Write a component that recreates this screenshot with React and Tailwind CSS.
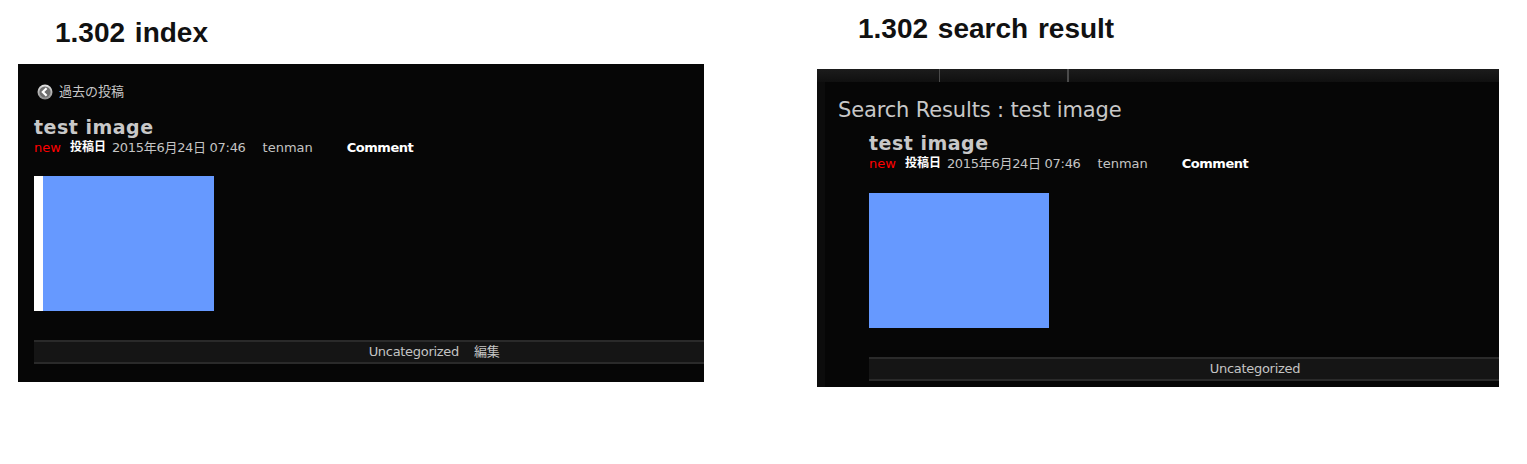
import React from "react";

const metaFont = "font-['DejaVu_Sans','Noto_Sans_CJK_JP',sans-serif]";

function BackIcon() {
  return (
    <svg width="16" height="16" viewBox="0 0 16 16" className="shrink-0">
      <defs>
        <linearGradient id="backGrad" x1="0" y1="0" x2="0" y2="1">
          <stop offset="0" stopColor="#e4e4e4" />
          <stop offset="1" stopColor="#8a8a8a" />
        </linearGradient>
      </defs>
      <circle cx="8" cy="8" r="7.5" fill="url(#backGrad)" />
      <circle cx="8" cy="8" r="5.6" fill="#6e6e6e" />
      <path d="M9.6 4.2 L5.8 8 L9.6 11.8" fill="none" stroke="#ffffff" strokeWidth="2.2" />
    </svg>
  );
}

function Post({ imageGap, barWidth, withStrip, children }) {
  return (
    <div className={metaFont}>
      <h2 className="text-[19px] leading-[22px] font-bold tracking-[0.5px] text-[#c8c8c8]">test image</h2>
      <div className="mt-[1px] flex h-[17px] items-center text-[13px] leading-[17px] text-[#c4c4c4]">
        <span className="text-[#ff0000]">new</span>
        <span className="ml-[9px] text-[12px] font-bold text-white">投稿日</span>
        <span className="ml-[6px] tracking-[-0.3px]">2015年6月24日 07:46</span>
        <span className="ml-[17px]">tenman</span>
        <span className="ml-[34px] font-bold tracking-[-0.5px] text-white">Comment</span>
      </div>
      <div className={`${imageGap} flex h-[135px] w-[180px] bg-[#6699ff]`}>
        {withStrip && <div className="h-full w-[9px] bg-white" />}
      </div>
      <div className={`${barWidth} mt-[29px] flex h-[24px] items-center justify-center border-y-2 border-[#2a2a2a] bg-[#151515] text-[13px] tracking-[-0.3px] text-[#c4c4c4]`}>
        {children}
      </div>
    </div>
  );
}

export default function App() {
  return (
    <div className="flex h-[464px] w-[1527px] bg-white font-['Liberation_Sans',sans-serif]">
      <div className="ml-[18px] w-[686px]">
        <h1 className="flex h-[64px] items-center pl-[37px] pt-[2px] text-[28px] font-bold text-[#111111] [word-spacing:2px]">1.302 index</h1>
        <div className="h-[318px] overflow-hidden bg-[#060606] pl-[16px] pt-[19px]">
          <div className={`flex h-[17px] items-center gap-[6px] pl-[3px] text-[13px] text-[#c8c8c8] ${metaFont}`}>
            <BackIcon />
            <span>過去の投稿</span>
          </div>
          <div className="mt-[16px]">
            <Post imageGap="mt-[20px]" barWidth="w-[800px]" withStrip>
              <span>Uncategorized</span>
              <span className="ml-[15px]">編集</span>
            </Post>
          </div>
        </div>
      </div>

      <div className="ml-[113px] w-[682px]">
        <h1 className="flex h-[69px] items-center pb-[11px] pl-[41px] text-[28px] font-bold text-[#111111] [word-spacing:2px]">1.302 search result</h1>
        <div className="h-[318px] overflow-hidden bg-[#060606]">
          <div className="flex h-[13px] bg-gradient-to-b from-[#1c1c1c] to-[#101010]">
            <div className="w-[123px] border-r border-[#4a4a4a]" />
            <div className="w-[129px] border-r-2 border-[#4a4a4a]" />
          </div>
          <div className="flex h-[305px]">
            <div className="w-[8px] bg-[#0c0c0c]" />
            <div className="min-w-0 flex-1 overflow-hidden pl-[13px]">
              <div className={`mt-[14px] text-[21px] leading-[28px] tracking-[-0.15px] text-[#c8c8c8] ${metaFont}`}>Search Results : test image</div>
              <div className="ml-[31px] mt-[8px]">
                <Post imageGap="mt-[21px]" barWidth="w-[772px]">
                  <span>Uncategorized</span>
                </Post>
              </div>
            </div>
          </div>
        </div>
      </div>
    </div>
  );
}
